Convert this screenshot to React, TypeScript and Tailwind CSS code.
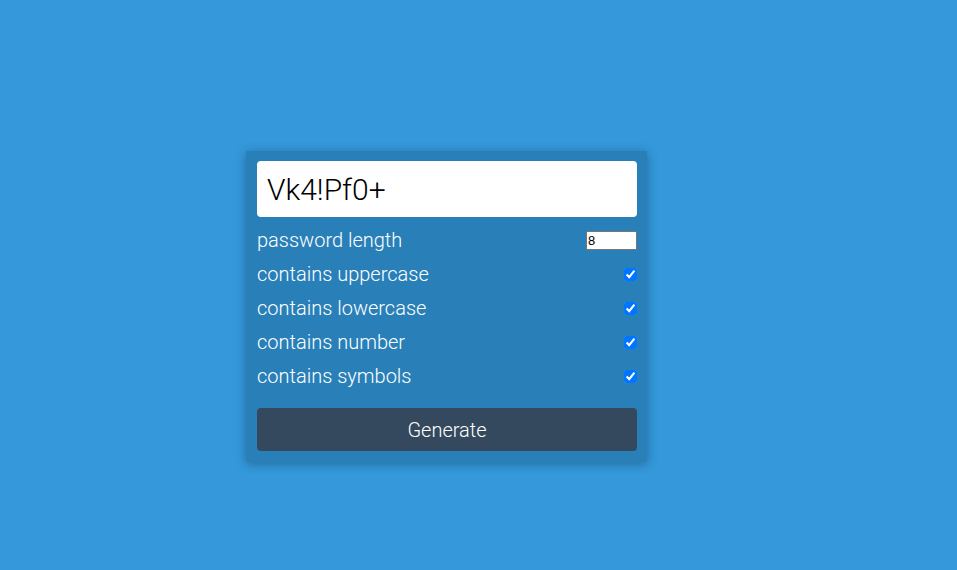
import React from "react";

const rows = ["contains uppercase", "contains lowercase", "contains number", "contains symbols"];

export default function App() {
  return (
    <div
      className="w-[957px] h-[570px] bg-[#3498db] pt-[151px] pl-[246px]"
      style={{ fontFamily: "Roboto, 'Liberation Sans', sans-serif" }}
    >
      <div className="w-[401px] bg-[#2980b9] pt-[10px] pb-[11px] pl-[11px] pr-[10px] shadow-[0_2px_10px_rgba(0,0,0,0.3)]">
        <div className="h-[56px] w-[380px] bg-white rounded-[4px] flex items-center pl-[10px] text-[30px] font-light text-black">
          Vk4!Pf0+
        </div>
        <div className="mt-[6px] flex flex-col">
          <div className="h-[34px] flex items-center justify-between text-[20px] font-light text-white">
            <span>password length</span>
            <input
              type="number"
              defaultValue={8}
              className="w-[51px] h-[19px] bg-white border border-[#767676] text-[13px] text-black px-[1px] leading-none"
              style={{ fontFamily: "'Liberation Sans', Arial, sans-serif" }}
            />
          </div>
          {rows.map((r) => (
            <div key={r} className="h-[34px] flex items-center justify-between text-[20px] font-light text-white">
              <span>{r}</span>
              <input type="checkbox" defaultChecked className="w-[13px] h-[13px] m-0 accent-[#0075ff]" />
            </div>
          ))}
        </div>
        <button className="mt-[15px] w-[380px] h-[43px] bg-[#34495e] rounded-[4px] text-[20px] font-light text-white flex items-center justify-center">
          Generate
        </button>
      </div>
    </div>
  );
}
